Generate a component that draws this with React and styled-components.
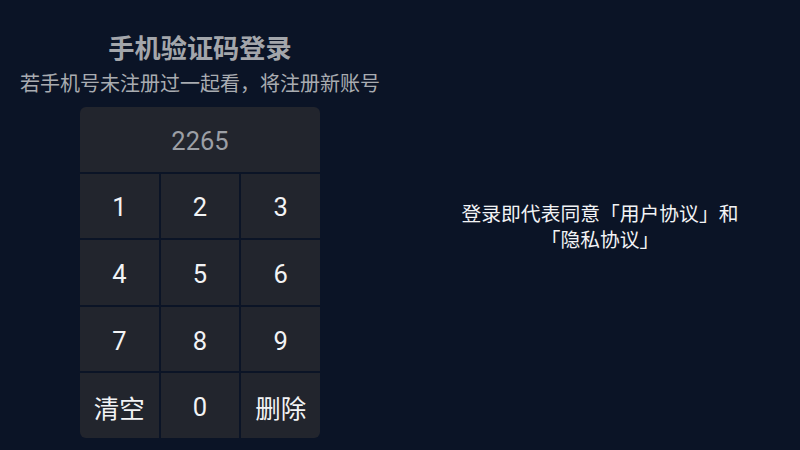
import React from "react";
import styled, { createGlobalStyle } from "styled-components";

const Global = createGlobalStyle`
  html, body { margin: 0; padding: 0; background: #0b1426; }
  body { font-family: Roboto, "Noto Sans CJK SC", sans-serif; }
`;

const cjk = `"Noto Sans CJK SC", Roboto, sans-serif`;

const Page = styled.div`
  width: 800px;
  height: 450px;
  display: grid;
  grid-template-columns: 400px 400px;
  background: #0b1426;
  overflow: hidden;
`;

const LeftCol = styled.div`
  display: flex;
  flex-direction: column;
  align-items: center;
  padding-top: 30px;
`;

const Title = styled.div`
  font-family: ${cjk};
  font-size: 26.2px;
  font-weight: 700;
  line-height: 34px;
  color: #a3a6ab;
`;

const Subtitle = styled.div`
  font-family: ${cjk};
  font-size: 20px;
  line-height: 28px;
  margin-top: 5px;
  white-space: nowrap;
  color: #a9acb1;
`;

const Pad = styled.div`
  margin-top: 10px;
  width: 240px;
  height: 331px;
  display: grid;
  grid-template-columns: repeat(3, 1fr);
  grid-template-rows: repeat(5, 1fr);
  gap: 2px;
  border-radius: 6px;
  overflow: hidden;
`;

const Display = styled.div`
  grid-column: 1 / -1;
  background: #22252d;
  display: flex;
  align-items: center;
  justify-content: center;
  padding-top: 3px;
  font-family: Roboto, sans-serif;
  font-size: 25.5px;
  color: #9c9fa5;
`;

const Key = styled.div`
  background: #22252d;
  display: flex;
  align-items: center;
  justify-content: center;
  padding-top: ${(p) => (p.$word ? "1px" : "3px")};
  font-family: ${(p) => (p.$word ? cjk : "Roboto, sans-serif")};
  font-size: 25.5px;
  color: #f2f3f5;
`;

const RightCol = styled.div`
  display: flex;
  align-items: center;
  justify-content: center;
  padding-top: 1px;
`;

const Agreement = styled.div`
  width: 292px;
  text-align: center;
  font-family: ${cjk};
  font-size: 19.8px;
  line-height: 26px;
  color: #f2f3f5;
`;

const keys = ["1", "2", "3", "4", "5", "6", "7", "8", "9", "清空", "0", "删除"];

export default function App() {
  return (
    <>
      <Global />
      <Page>
        <LeftCol>
          <Title>手机验证码登录</Title>
          <Subtitle>若手机号未注册过一起看，将注册新账号</Subtitle>
          <Pad>
            <Display>2265</Display>
            {keys.map((k) => (
              <Key key={k} $word={k.length > 1}>
                {k}
              </Key>
            ))}
          </Pad>
        </LeftCol>
        <RightCol>
          <Agreement>登录即代表同意「用户协议」和「隐私协议」</Agreement>
        </RightCol>
      </Page>
    </>
  );
}
